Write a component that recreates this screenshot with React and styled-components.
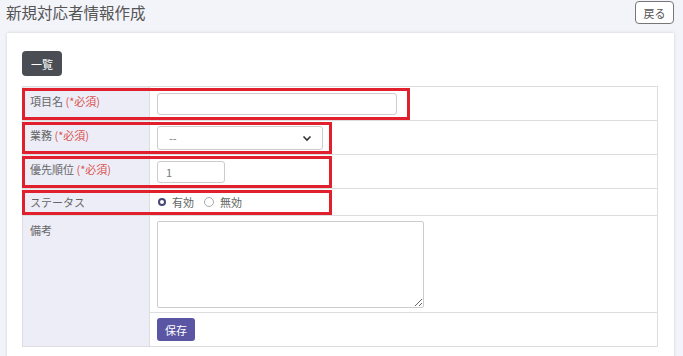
import styled, { createGlobalStyle } from 'styled-components';

const GlobalStyle = createGlobalStyle`
  body {
    margin: 0;
    background: #f3f3fa;
    font-family: "Noto Sans CJK JP", "Noto Sans", sans-serif;
    color: #555;
  }
`;

export default function App() {
  return (
    <>
      <GlobalStyle />
      <Page>
        <Header>
          <Title>新規対応者情報作成</Title>
          <BackButton>戻る</BackButton>
        </Header>
        <Card>
          <ListButton>一覧</ListButton>
          <Table>
            <Row $height={34} $mark={388}>
              <Label>項目名<Required> (*必須)</Required></Label>
              <Value>
                <TextInput $width={240} />
              </Value>
            </Row>
            <Row $height={34} $mark={310}>
              <Label>業務<Required> (*必須)</Required></Label>
              <Value>
                <Select>
                  <span>--</span>
                  <svg width="10" height="10" viewBox="0 0 10 10">
                    <path d="M1.5 3.5 L5 7 L8.5 3.5" fill="none" stroke="#333" strokeWidth="1.6" />
                  </svg>
                </Select>
              </Value>
            </Row>
            <Row $height={34} $mark={310}>
              <Label>優先順位<Required> (*必須)</Required></Label>
              <Value>
                <TextInput $width={68} defaultValue="1" />
              </Value>
            </Row>
            <Row $height={27} $mark={310}>
              <Label $center>ステータス</Label>
              <Value>
                <RadioGroup>
                  <RadioItem>
                    <Radio $checked />有効
                  </RadioItem>
                  <RadioItem>
                    <Radio />無効
                  </RadioItem>
                </RadioGroup>
              </Value>
            </Row>
            <Row $height={97}>
              <Label>備考</Label>
              <Value $top>
                <TextArea />
              </Value>
            </Row>
            <Row $height={33} $last>
              <Label />
              <Value>
                <SaveButton>保存</SaveButton>
              </Value>
            </Row>
          </Table>
        </Card>
      </Page>
    </>
  );
}

const Page = styled.div`
  display: flex;
  flex-direction: column;
`;

const Header = styled.div`
  display: flex;
  align-items: flex-start;
  justify-content: space-between;
  height: 33px;
  padding: 1px 9px 0 6px;
  box-sizing: border-box;
`;

const Title = styled.h1`
  margin: 0;
  font-size: 15.5px;
  font-weight: 400;
  color: #555;
  line-height: 22px;
`;

const BackButton = styled.button`
  width: 39px;
  height: 23px;
  padding: 0;
  border: 1px solid #777;
  border-radius: 4px;
  background: #fff;
  color: #555;
  font-family: inherit;
  font-size: 11px;
`;

const Card = styled.div`
  margin: 0 9px 0 7px;
  padding: 18px 16px 20px 15px;
  background: #fff;
  box-shadow: 0 0 3px rgba(0, 0, 0, 0.15);
  display: flex;
  flex-direction: column;
  align-items: flex-start;
  gap: 10px;
`;

const ListButton = styled.button`
  width: 40px;
  height: 25px;
  padding: 0;
  border: none;
  border-radius: 4px;
  background: #4a4e54;
  color: #fff;
  font-family: inherit;
  font-size: 11px;
`;

const Table = styled.div`
  align-self: stretch;
  border: 1px solid #ddd;
  display: flex;
  flex-direction: column;
`;

const Row = styled.div`
  position: relative;
  display: grid;
  grid-template-columns: 127px 1fr;
  box-sizing: border-box;
  height: ${(p) => p.$height}px;
  border-bottom: ${(p) => (p.$last ? 'none' : '1px solid #ddd')};

  &::after {
    content: '';
    display: ${(p) => (p.$mark ? 'block' : 'none')};
    position: absolute;
    box-sizing: border-box;
    left: -1px;
    top: 1px;
    width: ${(p) => p.$mark}px;
    bottom: 0;
    border: 3px solid #e0202c;
    pointer-events: none;
  }
`;

const Label = styled.div`
  background: #ededf7;
  border-right: 1px solid #ddd;
  padding: ${(p) => (p.$center ? '0 7px' : '7px 7px 0')};
  display: flex;
  align-items: ${(p) => (p.$center ? 'center' : 'flex-start')};
  font-size: 11px;
  color: #666;
  line-height: 14px;
`;

const Required = styled.span`
  color: #d9534f;
  white-space: pre;
`;

const Value = styled.div`
  display: flex;
  align-items: ${(p) => (p.$top ? 'flex-start' : 'center')};
  padding: ${(p) => (p.$top ? '5px 7px' : '0 7px')};
`;

const TextInput = styled.input`
  width: ${(p) => p.$width}px;
  height: 22px;
  box-sizing: border-box;
  border: 1px solid #ccc;
  border-radius: 3px;
  padding: 0 8px;
  font-family: inherit;
  font-size: 11px;
  color: #777;
  outline: none;
`;

const Select = styled.div`
  width: 166px;
  height: 24px;
  box-sizing: border-box;
  border: 1px solid #ccc;
  border-radius: 3px;
  padding: 0 10px 0 11px;
  display: flex;
  align-items: center;
  justify-content: space-between;
  font-size: 11px;
  color: #777;
`;

const RadioGroup = styled.div`
  display: flex;
  align-items: center;
  gap: 10px;
  padding-left: 1px;
`;

const RadioItem = styled.label`
  display: flex;
  align-items: center;
  gap: 6px;
  font-size: 11px;
  color: #666;
`;

const Radio = styled.span`
  width: ${(p) => (p.$checked ? '4px' : '8px')};
  height: ${(p) => (p.$checked ? '4px' : '8px')};
  border-radius: 50%;
  border: ${(p) => (p.$checked ? '2.5px solid #46467a' : '1px solid #aaa')};
  background: #fff;
`;

const TextArea = styled.textarea`
  width: 267px;
  height: 87px;
  box-sizing: border-box;
  border: 1px solid #ccc;
  border-radius: 2px;
  font-family: inherit;
  margin: 0;
  outline: none;
`;

const SaveButton = styled.button`
  width: 38px;
  height: 23px;
  padding: 0;
  border: none;
  border-radius: 3px;
  background: #5b56a3;
  color: #fff;
  font-family: inherit;
  font-size: 11px;
`;
